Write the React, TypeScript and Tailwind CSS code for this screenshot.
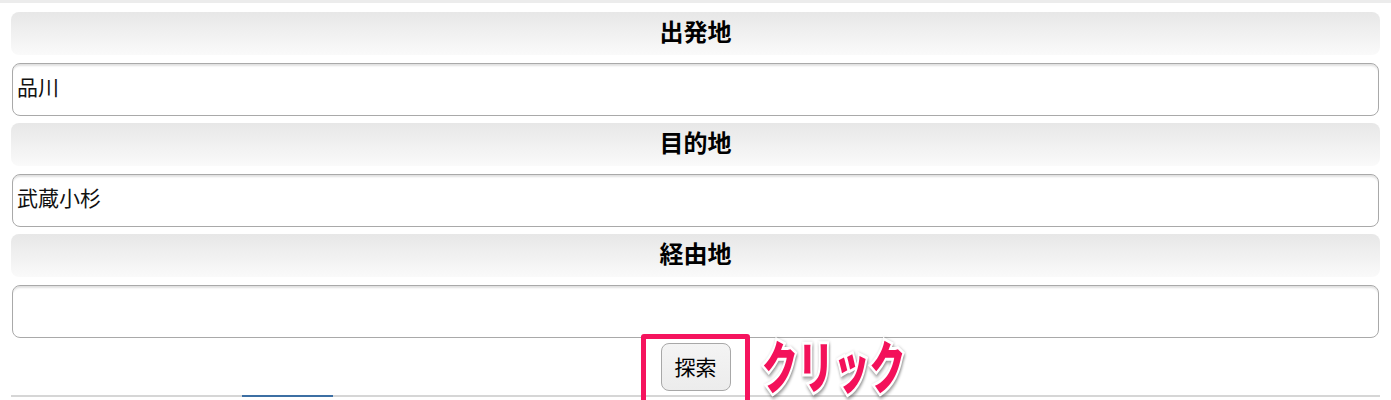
const fields = [
  { label: '出発地', value: '品川' },
  { label: '目的地', value: '武蔵小杉' },
  { label: '経由地', value: '' },
];

const jp = "font-['Meiryo','Noto_Sans_CJK_JP',sans-serif]";

export default function App() {
  return (
    <div className={`w-[1391px] h-[400px] overflow-hidden bg-white ${jp}`}>
      <div className="h-[3px] bg-[#ececec]" />
      <div className="px-[11px] pt-[9px] flex flex-col">
        {fields.map((f) => (
          <div key={f.label} className="flex flex-col pb-[7px]">
            <div className="h-[43px] pb-[6px] rounded-lg bg-gradient-to-b from-[#e7e7e7] to-[#fafafa] flex items-center justify-center">
              <span className="text-[24px] font-bold text-black leading-none">{f.label}</span>
            </div>
            <div className="mt-[8px] mx-px h-[53px] pb-[6px] rounded-[8px] border border-[#a9a9a9] bg-white shadow-[inset_0_3px_2px_-1px_rgba(0,0,0,0.12)] flex items-center px-[4px]">
              <span className="text-[21px] text-[#111] leading-none">{f.value}</span>
            </div>
          </div>
        ))}
      </div>
      <div className="relative h-[50px] flex justify-center">
        <button className="mt-[-2px] w-[70px] h-[48px] pb-[2px] rounded-[8px] border border-[#a8a8a8] bg-gradient-to-b from-[#f4f4f4] to-[#ececec] text-[21px] leading-none text-black">
          探索
        </button>
        <div className="absolute left-[641px] top-[-11px] w-[109px] h-[80px] border-[5px] border-[#f5145e] rounded-[3px]" />
        <div className="absolute left-[762px] top-[-21px] w-[240px] h-[80px] flex items-center">
          <span className="inline-block origin-left scale-x-[0.64] text-[56px] font-black leading-[1.3] text-[#f3115a] [-webkit-text-stroke:6px_white] [paint-order:stroke_fill] drop-shadow-[1px_2px_2px_rgba(0,0,0,0.45)] whitespace-nowrap">
            クリック
          </span>
        </div>
      </div>
      <div className="flex h-[4px] border-t-2 border-[#d6d6d6] mx-[11px]">
        <div className="ml-[231px] w-[91px] h-[2px] -mt-[2px] bg-[#3c6fa3]" />
      </div>
    </div>
  );
}
